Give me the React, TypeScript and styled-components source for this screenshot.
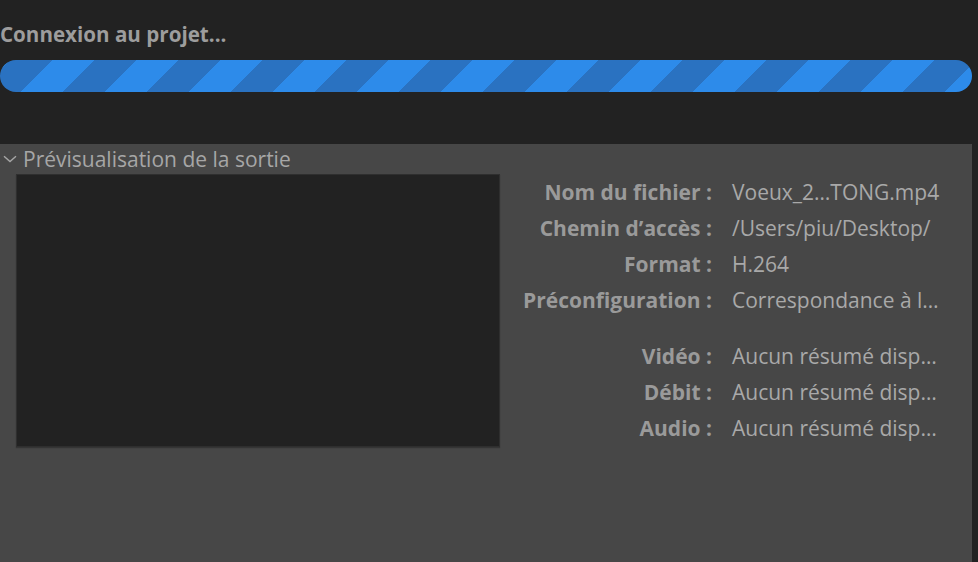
import styled, { createGlobalStyle } from "styled-components";

const GlobalStyle = createGlobalStyle`
  html, body {
    margin: 0;
    padding: 0;
    background: #222222;
    font-family: "Open Sans", "Noto Sans", sans-serif;
  }
  #root {
    height: 562px;
    overflow: hidden;
  }
`;

const Page = styled.div`
  display: flex;
  flex-direction: column;
  height: 562px;
  width: 978px;
  background: #222222;
`;

const Title = styled.h1`
  margin: 0;
  padding-top: 20px;
  height: 60px;
  box-sizing: border-box;
  font-size: 20.6px;
  line-height: 28px;
  font-weight: 700;
  color: #9d9d9d;
`;

const ProgressTrack = styled.div`
  width: 972px;
  height: 32px;
  flex-shrink: 0;
  border-radius: 16px;
  background: repeating-linear-gradient(
    135deg,
    #2d8bea 0px,
    #2d8bea 7.1px,
    #2a72c1 7.1px,
    #2a72c1 36.8px,
    #2d8bea 36.8px,
    #2d8bea 59.4px
  );
`;

const Panel = styled.section`
  margin-top: 52px;
  width: 972px;
  flex: 1;
  background: #474747;
  display: flex;
  flex-direction: column;
`;

const PanelHeader = styled.div`
  display: flex;
  align-items: center;
  gap: 6px;
  height: 30px;
  padding-left: 3px;
  color: #a6a6a6;
  font-size: 21px;
`;

const Body = styled.div`
  display: flex;
  padding-left: 16px;
`;

const Preview = styled.div`
  width: 482px;
  height: 271px;
  flex-shrink: 0;
  background: #222222;
  border: 1px solid #2f2f2f;
  box-shadow: 0 1px 1px rgba(0, 0, 0, 0.25);
`;

const Info = styled.dl`
  margin: 0;
  display: flex;
  flex-direction: column;
`;

const Row = styled.div<{ $gap?: boolean }>`
  display: grid;
  grid-template-columns: 212px auto;
  column-gap: 20px;
  align-items: center;
  height: 36px;
  margin-top: ${(p) => (p.$gap ? "20px" : "0")};
`;

const Label = styled.dt`
  text-align: right;
  font-size: 21px;
  font-weight: 700;
  color: #9a9a9a;
  white-space: nowrap;
`;

const Value = styled.dd`
  margin: 0;
  font-size: 21px;
  color: #a9a9a9;
  white-space: nowrap;
`;

const Chevron = () => (
  <svg width="14" height="8" viewBox="0 0 14 8" fill="none">
    <path d="M1 1.2 L7 6.6 L13 1.2" stroke="#a6a6a6" strokeWidth="1.4" />
  </svg>
);

const rows = [
  { label: "Nom du fichier :", value: "Voeux_2…TONG.mp4" },
  { label: "Chemin d’accès :", value: "/Users/piu/Desktop/" },
  { label: "Format :", value: "H.264" },
  { label: "Préconfiguration :", value: "Correspondance à l…" },
  { label: "Vidéo :", value: "Aucun résumé disp…", gap: true },
  { label: "Débit :", value: "Aucun résumé disp…" },
  { label: "Audio :", value: "Aucun résumé disp…" },
];

export default function App() {
  return (
    <Page>
      <GlobalStyle />
      <Title>Connexion au projet...</Title>
      <ProgressTrack />
      <Panel>
        <PanelHeader>
          <Chevron />
          Prévisualisation de la sortie
        </PanelHeader>
        <Body>
          <Preview />
          <Info>
            {rows.map((r) => (
              <Row key={r.label} $gap={r.gap}>
                <Label>{r.label}</Label>
                <Value>{r.value}</Value>
              </Row>
            ))}
          </Info>
        </Body>
      </Panel>
    </Page>
  );
}
